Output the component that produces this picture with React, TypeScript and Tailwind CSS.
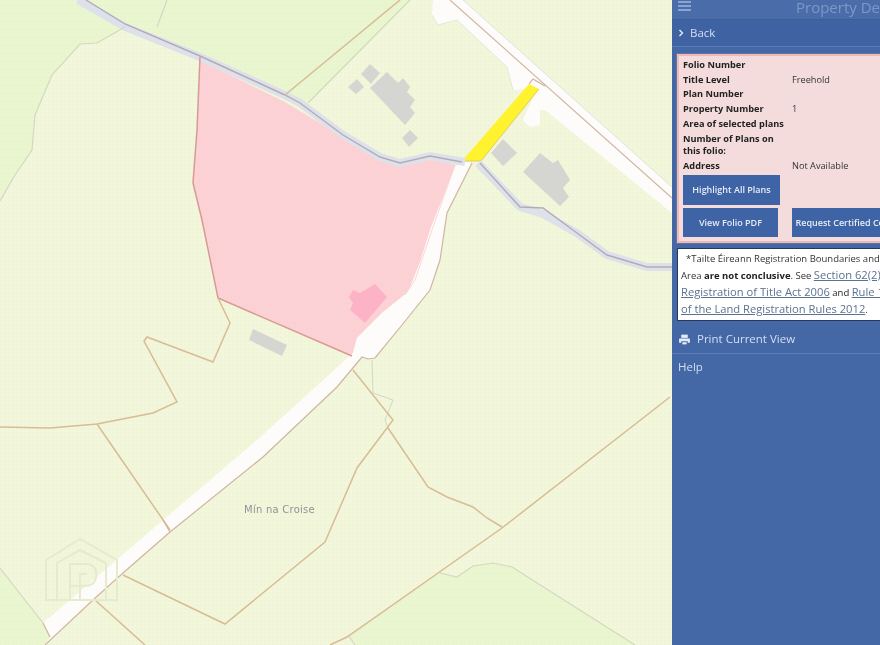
const font = { fontFamily: '"Open Sans", "Liberation Sans", sans-serif' };

const rows: [string, string, string][] = [
  ["Folio Number", "", "h-[15px]"],
  ["Title Level", "Freehold", "h-[15px]"],
  ["Plan Number", "", "h-[14px]"],
  ["Property Number", "1", "h-[15px]"],
  ["Area of selected plans", "", "h-[15px]"],
  ["Number of Plans on this folio:", "", "h-[27px]"],
  ["Address", "Not Available", "h-[15px]"],
];

function MapDrawing() {
  const brown = "#d9bb96";
  return (
    <svg viewBox="0 0 672 645" className="block h-[645px] w-[672px] shrink-0 blur-[0.5px]">
      <defs>
        <pattern id="dots" width="4" height="4" patternUnits="userSpaceOnUse">
          <rect width="4" height="4" fill="transparent" />
          <circle cx="1" cy="1" r="0.7" fill="#dfe6c0" opacity="0.5" />
        </pattern>
      </defs>
      <rect width="672" height="645" fill="#f2f6da" />
      {/* green land parcels */}
      <polygon points="0,0 80,0 125,27 97,43 80,44 52,75 35,115 32,150 15,175 0,201" fill="#e9f6cf" />
      <polygon points="80,0 410,0 308,103 285,95 200,57 125,27" fill="#e9f6cf" />
      <polygon points="355,645 348,635 440,573 457,577 473,566 493,563 512,567 635,645" fill="#e9f6d0" />
      <polygon points="0,568 43,623 50,637 45,645 0,645" fill="#e9f6d0" />

      {/* pink folio */}
      <polygon points="200,60 285,102 343,137 380,160 400,165 430,158 455,165 433,227 415,280 405,295 383,312 357,338 352,356 218,298 202,220 193,183 197,130" fill="#fdd0d6" />

      <rect width="672" height="645" fill="url(#dots)" />

      {/* white roads */}
      <polygon points="463,162 472,163 447,213 440,260 430,290 402,325 375,358 368,359 362,357 337,387 263,457 170,532 123,573 93,600 45,645 50,637 43,623 163,520 257,440 353,353 357,338 383,312 408,292 420,262 431,227 455,167" fill="#fdfcfa" />
      <polygon points="433,0 463,0 672,187 672,213 545,110 540,110 540,125 530,127 523,120 537,88 513,90 507,67 457,20 438,25 432,15" fill="#fdfcfa" />
      {/* yellow strip */}
      <polygon points="462,161 481,161 539,89 529,84" fill="#fff22e" />
      <polyline points="462,161 481,161 539,89" fill="none" stroke="#d9c35a" strokeWidth="0.8" />
      <polyline points="529,84 533,79 545,86" fill="none" stroke="#cdb09a" strokeWidth="1.2" />

      {/* stream roads */}
      <polyline points="78,0 125,27 200,57 285,95 300,103 343,135 380,157 400,163 430,156 465,162" fill="none" stroke="#dde2ea" strokeWidth="8" />
      <polyline points="478,163 520,207 543,214 577,233 607,255 647,267 672,267" fill="none" stroke="#dde2ea" strokeWidth="8" />
      <polyline points="86,0 125,24 200,56 285,95 300,103 343,135 380,157 400,163 430,156 462,162" fill="none" stroke="#b5a9b8" strokeWidth="1.4" />
      <polyline points="480,163 520,207 543,208 577,233 607,255 647,267 672,267" fill="none" stroke="#b5a9b8" strokeWidth="1.4" />

      {/* folio outline */}
      <polyline points="200,57 197,130 193,183 202,220 218,298 352,356" fill="none" stroke="#d89a96" strokeWidth="1.5" />
      <polyline points="455,165 433,227 415,280 405,295" fill="none" stroke="#fbd5d8" strokeWidth="1" />

      {/* grey parcel lines */}
      <g fill="none" stroke="#d3d8c2" strokeWidth="1.2">
        <polyline points="125,27 97,43 80,44 52,75 35,115 32,150 15,175 0,201" />
        <polyline points="167,0 157,27" />
        <polyline points="410,0 308,103" />
        <polyline points="440,573 457,577 473,566 493,563 512,567 635,645" />
        <polyline points="348,635 355,645" />
        <polyline points="0,568 43,623" />
      </g>
      <polyline points="372,360 373,393 393,400 385,420 388,428" fill="none" stroke="#c9dccb" strokeWidth="1" />

      {/* brown parcel lines */}
      <g fill="none" stroke={brown} strokeWidth="1.5">
        <polyline points="218,298 230,323 213,362 147,337 144,341 177,402 153,413 97,424 50,428 0,427" />
        <polyline points="97,424 170,530" />
        <polyline points="353,370 393,420 357,468 325,542 225,624 123,575" />
        <polyline points="388,428 428,487 447,497 473,507 487,518 502,527" />
        <polyline points="670,397 502,528 347,637 330,645" />
        <polyline points="95,600 145,645" />
        <polyline points="400,0 285,95" />
      </g>
      {/* road edge lines */}
      <g fill="none" stroke="#d0b5a2" strokeWidth="1.2">
        <polyline points="472,163 447,213 440,260 430,290 402,325 375,358 368,359 362,357 337,387 263,457 170,532 123,573 93,600 45,645" />
        <polyline points="450,0 672,198" />
        <polyline points="163,520 170,532" />
        <polyline points="43,623 50,637" />
      </g>
      <polyline points="463,0 672,187" fill="none" stroke="#dfe3dc" strokeWidth="1" />
      <polyline points="432,15 438,25 457,20 507,67 513,90" fill="none" stroke="#e6e8dc" strokeWidth="1" />

      {/* buildings */}
      <g fill="#d5d6d2">
        <polygon points="370,88 387,72 398,83 403,78 410,87 407,92 415,100 410,107 415,113 405,125" />
        <polygon points="370,64 380,73 371,84 361,74" />
        <polygon points="357,79 364,87 356,94 348,87" />
        <polygon points="410,130 418,138 409,147 402,138" />
        <polygon points="503,139 517,153 503,166 491,153" />
        <polygon points="540,153 553,163 558,160 570,180 563,188 569,197 560,206 523,172" />
        <polygon points="253,329 287,345 282,356 249,340" />
      </g>
      <polygon points="375,284 387,297 365,323 350,310 353,303 349,297 353,290 360,293" fill="#fdb3c6" />

      {/* watermark */}
      <g fill="none" stroke="#e5ebcd" strokeWidth="2">
        <polyline points="46,600 46,560 80,539 117,560 117,600 45,600" />
        <polyline points="57,600 57,563 80,550 106,563 106,600" />
        <path d="M70 600 V564 H88 Q98 566 96 578 Q94 586 84 586 H70" />
        <polyline points="80,600 80,574 87,574" />
      </g>

      <text x="279.5" y="513" textAnchor="middle" fontSize="10" letterSpacing="0.25" fill="#8e9399" fontFamily="'DejaVu Sans', sans-serif">Mín na Croise</text>
    </svg>
  );
}

export default function App() {
  return (
    <div className="flex h-[645px] w-[880px] overflow-hidden bg-[#f2f6da]" style={font}>
      <MapDrawing />
      <aside className="flex h-full w-[208px] shrink-0 flex-col overflow-hidden bg-[#4467a6] blur-[0.3px]">
        <header className="flex h-5 w-[320px] shrink-0 items-start border-b border-[#3c5f9c] bg-[#4a6ca9]">
          <div className="ml-[6px] flex w-[13px] flex-col gap-[2px] pt-[1px]">
            <span className="h-[2px] bg-[#8aa3d0]" />
            <span className="h-[2px] bg-[#8aa3d0]" />
            <span className="h-[2px] bg-[#8aa3d0]" />
          </div>
          <span className="ml-[105px] text-[15px] leading-[15px] whitespace-nowrap text-[#7c98c9]">Property Details</span>
        </header>
        <div className="flex h-[27px] shrink-0 items-center border-b border-[#5a7bb3] bg-[#3f62a2] pl-[6px]">
          <svg viewBox="0 0 8 10" className="h-[8px] w-[6px]">
            <polyline points="2,1 6,5 2,9" fill="none" stroke="#e8eef8" strokeWidth="1.8" />
          </svg>
          <span className="ml-[6px] text-[11.5px] font-medium text-[#d5dff0]">Back</span>
        </div>

        <section className="mt-[7px] ml-[5px] h-[189px] w-[320px] shrink-0 border-2 border-[#f2b8b4] bg-[#f5dcdc] pt-[1px] pl-[4px] outline outline-1 outline-[#5b77ab]">
          {rows.map(([label, value, h]) => (
            <div key={label} className={`flex items-center text-[9.2px] leading-[12px] text-[#222] ${h}`}>
              <span className="w-[109px] shrink-0 pr-1 font-bold">{label}</span>
              <span className="text-[#333]">{value}</span>
            </div>
          ))}
          <button className="mt-[2px] block h-[30px] w-[97px] bg-[#3f64a6] text-[9px] font-semibold text-[#e6ecf7]">Highlight All Plans</button>
          <div className="mt-[3px] flex gap-[14px]">
            <button className="h-[29px] w-[95px] bg-[#3f64a6] text-[9px] font-semibold text-[#e6ecf7]">View Folio PDF</button>
            <button className="h-[29px] w-[106px] bg-[#3f64a6] text-[9px] font-semibold whitespace-nowrap text-[#e6ecf7]">Request Certified Copy</button>
          </div>
        </section>

        <section className="mt-[5px] ml-[5px] h-[73px] w-[320px] shrink-0 border border-[#28375a] bg-white pt-[2px] pl-[3px] text-[9.5px] leading-4 whitespace-nowrap text-[#333]">
          <p className="pl-[5px]">*Tailte Éireann Registration Boundaries and Area</p>
          <p>
            Area <b className="text-[#222]">are not conclusive</b>. See{" "}
            <a className="text-[11.2px] text-[#5b7290] underline">Section 62(2) of the</a>
          </p>
          <p>
            <a className="text-[11.2px] text-[#5b7290] underline">Registration of Title Act 2006</a>{" "}
            <span className="text-[#222]">and</span>{" "}
            <a className="text-[11.2px] text-[#5b7290] underline">Rule 121</a>
          </p>
          <p>
            <a className="text-[11.2px] text-[#5b7290] underline">of the Land Registration Rules 2012</a>.
          </p>
        </section>

        <div className="mt-[4px] flex h-[29px] shrink-0 items-center border-b border-[#5a7bb3] pl-[6px]">
          <svg viewBox="0 0 24 24" className="h-[13px] w-[13px]" fill="#e4ebf6">
            <path d="M6 3h12v6H6z" />
            <path d="M3 10h18a1 1 0 0 1 1 1v7h-4v-3H6v3H2v-7a1 1 0 0 1 1-1z" />
            <path d="M8 17h8v4H8z" />
          </svg>
          <span className="ml-[6px] text-[11.5px] text-[#d5dff0]">Print Current View</span>
        </div>
        <div className="flex h-[26px] shrink-0 items-center pl-[6px] text-[11.5px] text-[#d5dff0]">Help</div>
      </aside>
    </div>
  );
}
